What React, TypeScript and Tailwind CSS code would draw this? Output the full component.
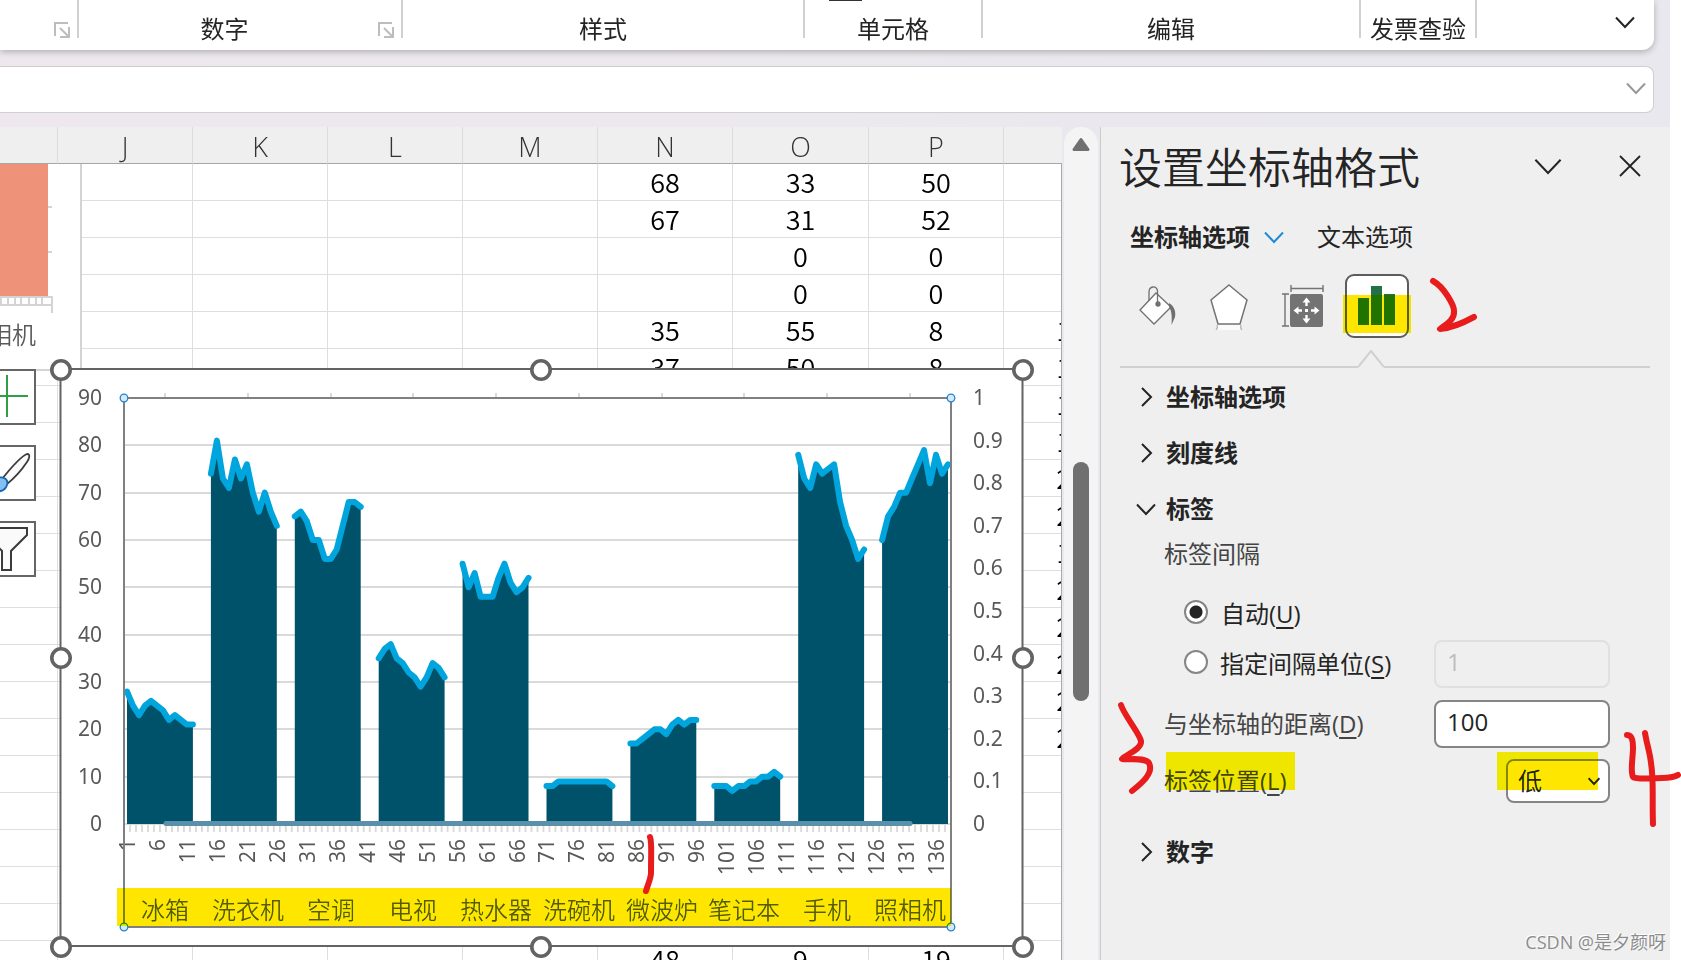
import { useState } from "react";

const RIBBON_GROUPS = [
  { label: '', width: 'w-[79px]', launcher: true },
  { label: '数字', width: 'w-[324px]', launcher: true },
  { label: '样式', width: 'w-[402px]', launcher: false },
  { label: '单元格', width: 'w-[178px]', launcher: false },
  { label: '编辑', width: 'w-[378px]', launcher: false },
  { label: '发票查验', width: 'w-[116px]', launcher: false },
]

const COLUMNS = ['', 'J', 'K', 'L', 'M', 'N', 'O', 'P', '']
const COLUMN_WIDTHS = [58, 135, 135, 135, 135, 135, 136, 135, 135]

// N, O, P, Q
const ROWS: string[][] = [
  ['68', '33', '50', ''],
  ['67', '31', '52', ''],
  ['', '0', '0', ''],
  ['', '0', '0', ''],
  ['35', '55', '8', '17'],
  ['37', '50', '8', '17'],
  ['', '', '', '18'],
  ['', '', '', '19'],
  ['', '', '', '20'],
  ['', '', '', '20'],
  ['', '', '', '19'],
  ['', '', '', '21'],
  ['', '', '', '22'],
  ['', '', '', '21'],
  ['', '', '', '22'],
  ['', '', '', '22'],
  ['', '', '', ''],
  ['', '', '', ''],
  ['', '', '', ''],
  ['', '', '', ''],
  ['', '', '', ''],
  ['48', '9', '19', ''],
]

const SERIES = [
  { name: '冰箱', values: [28, 25, 23, 25, 26, 25, 24, 22, 23, 22, 21, 21] },
  { name: '洗衣机', values: [74, 81, 73, 71, 77, 73, 76, 70, 66, 70, 66, 63] },
  { name: '空调', values: [65, 66, 64, 60, 60, 56, 56, 58, 63, 68, 68, 67] },
  { name: '电视', values: [35, 37, 38, 35, 34, 32, 31, 29, 31, 34, 33, 31] },
  { name: '热水器', values: [55, 50, 53, 48, 48, 48, 52, 55, 51, 49, 50, 52] },
  { name: '洗碗机', values: [8, 8, 9, 9, 9, 9, 9, 9, 9, 9, 9, 8] },
  { name: '微波炉', values: [17, 17, 18, 19, 20, 20, 19, 21, 22, 21, 22, 22] },
  { name: '笔记本', values: [8, 8, 8, 7, 8, 8, 9, 9, 10, 10, 11, 10] },
  { name: '手机', values: [78, 73, 71, 76, 74, 75, 76, 68, 63, 60, 56, 58] },
  { name: '照相机', values: [60, 65, 67, 70, 70, 73, 76, 79, 72, 78, 74, 76] },
]

// plot area inside the chart's own svg
const LEFT = 76
const RIGHT = 903
const TOP = 42
const BASE = 468
const BOTTOM = 571
const STEP = (RIGHT - LEFT) / 138
const BAND = (RIGHT - LEFT) / 10

const px = (i: number) => LEFT + STEP / 2 + i * STEP
const py = (v: number) => BASE - (v * (BASE - TOP)) / 90

function Chevron({ className, dir = 'down', w = 20 }: { className?: string; dir?: 'down' | 'right'; w?: number }) {
  return (
    <svg width={w} height={w} viewBox="0 0 20 20" fill="none" stroke="currentColor" strokeWidth={40 / w} className={className} aria-hidden="true">
      <path d={dir === 'down' ? 'M1 5.5 L10 15 L19 5.5' : 'M6 1 L15 10 L6 19'} />
    </svg>
  )
}

function Launcher() {
  return (
    <button aria-label="更多" className="mr-[7px] mb-3 ml-2 self-end">
      <svg width="16" height="16" viewBox="0 0 16 16" fill="none" stroke="#bdbdbd" strokeWidth="2">
        <path d="M1 14V1h13M6 6l8 8M15 5v10H6" />
      </svg>
    </button>
  )
}

function Ribbon() {
  return (
    <div className="mr-4 flex h-[50px] shrink-0 rounded-br-xl bg-white text-2xl leading-6 text-[#242424] shadow-[0_2px_6px_rgba(0,0,0,0.25)]">
      {RIBBON_GROUPS.map((g, i) => (
        <div key={i} className={`relative flex shrink-0 ${g.width}`}>
          <span className="flex-1 pt-[17px] text-center">{g.label}</span>
          {g.launcher && <Launcher />}
          <span className="h-[38px] w-[2px] bg-[#d0d0d0]" />
          {g.label === '单元格' && <span className="absolute top-0 left-6 h-px w-[33px] bg-[#333]" />}
        </div>
      ))}
      <div className="flex flex-1 justify-end pt-3 pr-[19px]">
        <button aria-label="折叠功能区" className="h-5"><Chevron /></button>
      </div>
    </div>
  )
}

function Sheet() {
  return (
    <table className="w-[1139px] table-fixed border-separate border-spacing-0 bg-white">
      <colgroup>
        {COLUMN_WIDTHS.map((w, i) => <col key={i} style={{ width: w }} />)}
      </colgroup>
      <thead>
        <tr className="h-[37px]">
          {COLUMNS.map((c, i) => (
            <th key={i} className="border-r border-b border-r-[#dcdcdc] border-b-[#a6a6a6] bg-[#efefef] px-0 pt-[3px] pb-0 font-['Open_Sans',sans-serif] text-[27px] leading-8 font-light text-[#333]">{c}</th>
          ))}
        </tr>
      </thead>
      <tbody>
        {ROWS.map((row, r) => (
          <tr key={r} className="h-[37px]">
            {['', '', '', '', '', ...row].map((v, c) => (
              <td key={c} className="border-r border-b border-[#dedede] p-0 text-center text-[27px] leading-8 font-[350] text-black">{v}</td>
            ))}
          </tr>
        ))}
      </tbody>
    </table>
  )
}

function PreviousChart() {
  return (
    <div className="absolute top-[37px] left-0 h-[207px] w-[82px] border-r-2 border-b-2 border-[#d4d4d4] bg-white">
      <svg width="80" height="205" viewBox="0 0 80 205">
        <rect width="48" height="132" fill="#ee937a" />
        <path d="M48 43h4M48 88h4M0 133h52v16M0 141h52" stroke="#d4d4d4" strokeWidth="2" fill="none" />
        <path d="M1 134v7M8 134v7M15 134v7M21 134v7M29 134v7M36 134v7M42 134v7" stroke="#d4d4d4" strokeWidth="2" />
        <text x="36" y="180" textAnchor="end" fontSize="24" fill="#595959" className="font-[350]">照相机</text>
      </svg>
    </div>
  )
}

function ChartButtons() {
  const box = 'h-14 w-14 border-2 border-[#666] bg-white'
  return (
    <div className="absolute top-[242px] -left-5 flex flex-col gap-5">
      <button aria-label="图表元素" className={box}>
        <svg width="52" height="52" viewBox="0 0 52 52" fill="none" stroke="#2ea043" strokeWidth="2">
          <path d="M25 4v42M4 25h42" />
        </svg>
      </button>
      <button aria-label="图表样式" className={box}>
        <svg width="52" height="52" viewBox="0 0 52 52" stroke="#3b3b3b" strokeWidth="1.8">
          <path d="M20 32 C28 22 40 9 45 7 C49 7 47 12 45 15 C39 24 30 33 25 37 Z" fill="#fafafa" />
          <path d="M8 43 C12 40 11 35 14 32 C20 28 27 32 25 38 C23 45 14 46 8 43Z" fill="#83bff0" stroke="#1266b3" />
        </svg>
      </button>
      <button aria-label="图表筛选器" className={box}>
        <svg width="52" height="52" viewBox="0 0 52 52" fill="#fafafa" stroke="#3b3b3b" strokeWidth="2">
          <path d="M5 5h40v7L29 28v19h-9V28L5 12z" />
        </svg>
      </button>
    </div>
  )
}

function Chart() {
  const grid = [10, 20, 30, 40, 50, 60, 70, 80, 90]
  const tens = [0, ...grid]
  const tenths = ['0', '0.1', '0.2', '0.3', '0.4', '0.5', '0.6', '0.7', '0.8', '0.9', '1']
  const ticks = Array.from({ length: 139 }, (_, i) => LEFT + i * STEP)
  const numbers = Array.from({ length: 28 }, (_, i) => i * 5)

  return (
    <svg width="990" height="610" viewBox="0 0 990 610" className="absolute top-[229px] left-12">
      <rect x="12.5" y="13" width="962" height="577" fill="#fff" stroke="#636363" strokeWidth="2" />

      {grid.map(v => <path key={v} d={`M${LEFT} ${Math.round(py(v))}H${RIGHT}`} stroke="#dadada" strokeWidth="2" />)}
      {SERIES.map((s, g) => <path key={s.name} d={`M${Math.round(LEFT + BAND * (g + 0.5))} 37v5`} stroke="#d9d9d9" strokeWidth="2" />)}
      <path d={`M${LEFT} ${BASE}H${RIGHT}`} stroke="#d9d9d9" strokeWidth="2" />
      {ticks.map((x, i) => <path key={i} d={`M${x} 469v7`} stroke="#d9d9d9" strokeWidth="1.8" />)}

      {SERIES.map((s, g) => {
        const pts = s.values.map((v, i) => `${px(g * 14 + i).toFixed(1)},${py(v).toFixed(1)}`)
        return (
          <g key={s.name}>
            <polygon points={`${px(g * 14)},${BASE} ${pts.join(' ')} ${px(g * 14 + 11)},${BASE}`} fill="#00526b" />
            <polyline points={pts.join(' ')} fill="none" stroke="#00a5de" strokeWidth="6" strokeLinecap="round" strokeLinejoin="round" />
          </g>
        )
      })}
      <path d="M118 467.5H862" stroke="#5b90ab" strokeWidth="5" strokeLinecap="round" />

      <g fontSize="21" fill="#595959" className="font-['Noto_Sans',sans-serif]">
        {tens.map(v => <text key={v} x="54" y={Math.round(py(v)) + 7} textAnchor="end">{v}</text>)}
        {tenths.map((t, i) => <text key={t} x="925" y={Math.round(BASE - i * 42.6) + 7}>{t}</text>)}
        {numbers.map(n => (
          <text key={n} transform={`translate(${Math.round(px(n)) + 8} 483) rotate(-90)`} textAnchor="end">{n + 1}</text>
        ))}
      </g>

      <g fontSize="24" fill="#595959" textAnchor="middle" className="font-[350]">
        {SERIES.map((s, g) => <text key={s.name} x={Math.round(LEFT + BAND * (g + 0.5))} y="563">{s.name}</text>)}
      </g>

      <rect x={LEFT} y={TOP} width={RIGHT - LEFT} height={BOTTOM - TOP} fill="none" stroke="#808080" strokeWidth="2" />
      {[[LEFT, TOP], [RIGHT, TOP], [LEFT, BOTTOM], [RIGHT, BOTTOM]].map(([x, y]) => (
        <circle key={`${x}-${y}`} cx={x} cy={y} r="3.8" fill="#d6e9f8" stroke="#2384d0" strokeWidth="1.3" />
      ))}
      {[[13, 14], [493, 14], [975, 14], [13, 302], [975, 302], [13, 591], [493, 591], [975, 591]].map(([x, y]) => (
        <circle key={`${x}-${y}`} cx={x} cy={y} r="9.2" fill="#fff" stroke="#636363" strokeWidth="3.6" />
      ))}

      <rect x="69" y="532" width="834" height="38" fill="#ffe600" className="mix-blend-darken" />
      <path d="M602 481 C604 486 603 492 603 517 C603 522 600 528 598 535" fill="none" stroke="#e81c1c" strokeWidth="6" strokeLinecap="round" />
    </svg>
  )
}

function ScrollBar() {
  return (
    <div className="flex w-[38px] shrink-0 justify-center bg-[#e9e8ee]">
      <div className="flex w-[34px] flex-col items-center rounded-t-full bg-[#f4f4f4] pt-[10px]">
        <svg width="18" height="15" viewBox="0 0 18 15" fill="#707070" stroke="#707070" strokeWidth="3" strokeLinejoin="round">
          <path d="M9 2.5 L16 12.5 H2 Z" />
        </svg>
        <div className="mt-[310px] h-[239px] w-4 rounded-full bg-[#707070]" />
      </div>
    </div>
  )
}

function PaneIcons() {
  return (
    <div className="flex h-[82px] items-center pl-9">
      <button aria-label="填充与线条">
        <svg width="40" height="44" viewBox="0 0 40 44" fill="none" stroke="#6f6f6f" strokeWidth="1.3">
          <path d="M19 9 L34 23 L17 40 L3 26 Z" fill="#fff" />
          <path d="M12 17 V8 C12 2 20 1 20.5 7 V20" />
          <circle cx="21" cy="20" r="2" fill="#6f6f6f" />
          <path d="M32 19 C37 22 39 27 38 33 L34.5 41 C35 34 35 27 32 23Z" fill="#6f6f6f" stroke="none" />
        </svg>
      </button>
      <button aria-label="效果" className="ml-8">
        <svg width="40" height="48" viewBox="0 0 40 48" fill="none">
          <path d="M20 3 L38 18 L31 42 H9 L2 18 Z" fill="#fff" stroke="#737373" strokeWidth="1.5" />
          <path d="M8 43 C9 46 8 48 7 49 H33 C31 48 31 46 32 43Z" fill="#fafafa" />
          <path d="M8 43q1 3-1 5M32 43q-1 3 1 5" stroke="#b5b5b5" strokeWidth="1.3" />
        </svg>
      </button>
      <button aria-label="大小与属性" className="ml-8">
        <svg width="44" height="44" viewBox="0 0 44 44" fill="none" stroke="#737373" strokeWidth="1.4">
          <path d="M10 4.5H42M10 1v7M42 1v7M4 10V42M1 10h7M1 42h7" />
          <rect x="9" y="10" width="33" height="33" rx="2" fill="#737373" stroke="none" />
          <path d="M25.5 16v6M25.5 37v-6M15 26.5h6M36 26.5h-6" stroke="#fff" strokeWidth="2.4" />
          <path d="M25.5 13.5l-4 5h8zM25.5 39.5l-4-5h8zM12.5 26.5l5-4v8zM38.5 26.5l-5-4v8z" fill="#fff" stroke="none" />
          <rect x="24" y="25" width="3" height="3" fill="#fff" stroke="none" />
        </svg>
      </button>
      <button aria-label="坐标轴选项" className="relative ml-5 h-16 w-16 rounded-[9px] border-2 border-[#5c5c5c] bg-white">
        <svg width="60" height="60" viewBox="0 0 60 60" fill="#217346">
          <path d="M11 22h11v27H11zM24 10h11v39H24zM37 18h11v31H37z" />
        </svg>
        <span className="absolute top-[19px] -left-1 h-[38px] w-[68px] bg-[#ffe600] mix-blend-darken" />
      </button>
    </div>
  )
}

function SectionHeader({ title, open = false }: { title: string; open?: boolean }) {
  return (
    <button aria-expanded={open} className="flex h-14 items-center gap-[10px] pl-[35px] text-2xl font-bold text-[#242424]">
      <Chevron dir={open ? 'down' : 'right'} w={20} />
      {title}
    </button>
  )
}

// ink marks drawn over the pane
function PaneMarks() {
  return (
    <svg width="581" height="833" viewBox="1 0 581 833" fill="none" stroke="#e81c1c" strokeWidth="6" strokeLinecap="round" strokeLinejoin="round" className="pointer-events-none absolute top-0 left-0">
      <path d="M333 154 C344 160 354 178 354 184 C355 193 345 198 340 202 C352 201 363 196 374 190" />
      <path d="M21 578 C24 588 40 607 41 614 C42 622 27 627 22 632 C30 633 45 630 49 636 C54 646 42 656 32 664" />
      <path d="M527 608 C532 608 533 613 533 620 C533 632 530 644 533 650 C537 653 552 651 562 651 C569 651 574 650 578 648" />
      <path d="M545 606 C547 618 550 626 551 636 C554 655 552 670 553 697" />
    </svg>
  )
}

function FormatPane() {
  const [mode, setMode] = useState('auto')
  const radio = 'mb-1 h-6 w-6 shrink-0 appearance-none rounded-full border-2 border-[#858585] bg-white checked:bg-[radial-gradient(circle,#242424_6px,#fff_7px)]'
  const field = 'h-12 w-[176px] rounded-lg border-2 pb-[6px] pl-[11px] text-2xl'

  return (
    <aside className="relative flex w-[570px] shrink-0 flex-col border-l border-[#cbcbcb] bg-[#efefef] text-2xl leading-8 text-[#242424]">
      <div className="flex h-[82px] items-center pl-[18px]">
        <h2 className="flex-1 text-[43px] leading-[50px] font-[350]">设置坐标轴格式</h2>
        <button aria-label="任务窗格选项" className="mr-[57px] mb-1"><Chevron w={28} /></button>
        <button aria-label="关闭" className="mr-[29px] mb-1">
          <svg width="22" height="22" viewBox="0 0 22 22" stroke="currentColor" strokeWidth="1.8"><path d="M1 1l20 20M21 1L1 21" /></svg>
        </button>
      </div>

      <div className="flex h-14 items-center pl-[29px]">
        <button className="flex items-center gap-[14px] font-bold">坐标轴选项 <Chevron className="text-[#1f8ad6]" /></button>
        <button className="ml-[33px]">文本选项</button>
      </div>

      <PaneIcons />

      <div className="flex h-[21px] items-end pr-5 pl-[19px]">
        <span className="h-[2px] w-[238px] bg-[#d0d0d0]" />
        <svg width="26" height="18" viewBox="0 0 26 18" fill="none" stroke="#d0d0d0" strokeWidth="2"><path d="M0 17L13 1l13 16" /></svg>
        <span className="h-[2px] flex-1 bg-[#d0d0d0]" />
      </div>

      <div className="flex flex-col pt-px pr-[60px]">
        <SectionHeader title="坐标轴选项" />
        <SectionHeader title="刻度线" />
        <SectionHeader title="标签" open />

        <fieldset>
          <legend className="h-9 pt-px pl-[63px] text-[#444]">标签间隔</legend>
          <label className="mt-4 flex h-[50px] items-center gap-[13px] pl-[83px]">
            <input type="radio" name="interval" className={radio} checked={mode === 'auto'} onChange={() => setMode('auto')} />
            <span>自动(<u className="underline-offset-4">U</u>)</span>
          </label>
          <div className="flex h-[50px] items-center justify-between pl-[83px]">
            <label className="flex items-center gap-3">
              <input type="radio" name="interval" className={radio} checked={mode === 'unit'} onChange={() => setMode('unit')} />
              <span>指定间隔单位(<u className="underline-offset-4">S</u>)</span>
            </label>
            <input aria-label="间隔单位" disabled={mode === 'auto'} defaultValue="1" className={`${field} border-[#e0e0e0] text-[#bdbdbd]`} />
          </div>
        </fieldset>

        <div className="mt-[11px] flex h-12 items-center justify-between pl-[63px]">
          <label htmlFor="distance" className="text-[#444]">与坐标轴的距离(<u className="underline-offset-4">D</u>)</label>
          <input id="distance" defaultValue="100" className={`${field} border-[#858585] bg-white`} />
        </div>

        <div className="relative mt-[11px] flex h-11 items-center justify-between pl-[63px]">
          <label htmlFor="position" className="text-[#444]">标签位置(<u className="underline-offset-4">L</u>)</label>
          <div className="relative">
            <select id="position" className="h-11 w-[104px] appearance-none rounded-lg border-2 border-[#858585] bg-white pl-[10px] text-2xl">
              <option>低</option>
            </select>
            <Chevron w={12} className="pointer-events-none absolute top-4 right-[10px]" />
          </div>
          <span className="pointer-events-none absolute -top-[7px] left-[65px] h-[38px] w-[129px] bg-[#ffe600] mix-blend-darken" />
          <span className="pointer-events-none absolute -top-[7px] right-3 h-[38px] w-[101px] bg-[#ffe600] mix-blend-darken" />
        </div>

        <div className="mt-[21px] flex">
          <SectionHeader title="数字" />
        </div>
      </div>

      <p className="mt-auto mr-1 mb-1 text-right text-lg leading-7 text-[#8c8c8c] [text-shadow:-1px_-1px_0_#fff]">CSDN @是夕颜呀</p>
      <PaneMarks />
    </aside>
  )
}

export default function App() {
  return (
    <div className="h-screen overflow-hidden bg-white pr-[11px] font-['Open_Sans','Noto_Sans_CJK_SC',sans-serif]">
      <div className="flex h-full flex-col bg-linear-to-r from-[#eee8ee] to-[#e8e8ee]">
        <Ribbon />
        <div className="relative mt-4 mr-4 shrink-0">
          <input aria-label="编辑栏" className="block h-[47px] w-full rounded-r-lg border border-l-0 border-[#cfcfcf] bg-white pr-12 pl-3 text-2xl" />
          <button aria-label="展开编辑栏" className="absolute top-3 right-2 text-[#999]"><Chevron /></button>
        </div>
        <div className="mt-[14px] flex min-h-0 flex-1">
          <main className="relative min-w-0 flex-1 overflow-hidden font-['Noto_Sans_CJK_SC',sans-serif]">
            <Sheet />
            <div className="pointer-events-none absolute top-9 right-0 bottom-0 w-px bg-[#a9a9a9]" />
            <PreviousChart />
            <ChartButtons />
            <Chart />
          </main>
          <ScrollBar />
          <FormatPane />
        </div>
      </div>
    </div>
  )
}
